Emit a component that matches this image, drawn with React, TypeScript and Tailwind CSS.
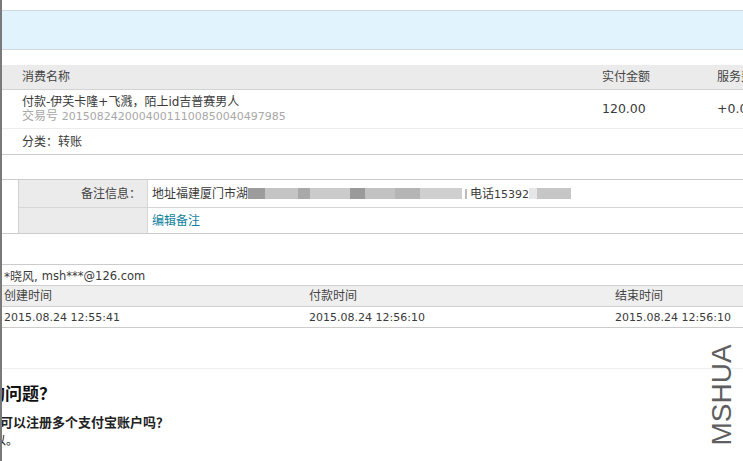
export default function App() {
  const blur = [
    { w: 17, c: "bg-[#9c9c9c]" },
    { w: 33, c: "bg-[#c4c4c4]" },
    { w: 12, c: "bg-[#a9a9a9]" },
    { w: 40, c: "bg-[#cbcbcb]" },
    { w: 15, c: "bg-[#9a9a9a]" },
    { w: 30, c: "bg-[#c2c2c2]" },
    { w: 25, c: "bg-[#b5b5b5]" },
    { w: 42, c: "bg-[#cfcfcf]" },
  ];

  return (
    <div className="relative h-[461px] w-[743px] overflow-hidden border-l-2 border-[#7a7a7a] bg-white text-[12px] leading-none text-[#3a3a3a] font-['DejaVu_Sans','Noto_Sans_CJK_SC',sans-serif]">
      <div className="h-[10px]" />
      <div className="h-[40px] border-y border-[#cfd9df] bg-[#e1f3fd]" />
      <div className="h-[15px]" />

      {/* trade info */}
      <div className="grid h-[25px] grid-cols-[600px_115px_1fr] items-center border-b border-[#d2d2d2] bg-[#ebebeb] text-[#444]">
        <div className="pl-[20px]">消费名称</div>
        <div>实付金额</div>
        <div className="whitespace-nowrap">服务费</div>
      </div>
      <div className="grid h-[39px] grid-cols-[600px_115px_1fr] items-center border-b border-[#ececec]">
        <div className="flex flex-col gap-[2px] pl-[20px]">
          <span>付款-伊芙卡隆+飞溅，陌上id吉普赛男人</span>
          <span className="text-[#a8a8a8]">
            交易号 <span className="text-[11px]">20150824200040011100850040497985</span>
          </span>
        </div>
        <div className="text-[12.5px]">120.00</div>
        <div className="whitespace-nowrap text-[12.5px]">+0.00</div>
      </div>
      <div className="flex h-[26px] items-center border-b border-[#cccccc] pl-[20px]">分类：转账</div>

      <div className="h-[24px]" />

      {/* memo */}
      <div className="flex border-y border-[#cccccc]">
        <div className="w-[16px]" />
        <div className="grid flex-1 grid-cols-[129px_1fr] border-l border-[#d0d0d0]">
          <div className="flex h-[28px] items-center justify-end border-r border-b border-[#d6d6d6] bg-[#ebebeb] pr-[6px] text-[#444]">
            备注信息：
          </div>
          <div className="flex h-[28px] items-center border-b border-[#d6d6d6] pl-[4px]">
            <span>地址福建厦门市湖</span>
            <span className="flex h-[11px] blur-[0.6px]">
              {blur.map((b, i) => (
                <span key={i} className={b.c} style={{ width: b.w }} />
              ))}
            </span>
            <span className="ml-[3px] mr-[3px] h-[10px] w-[2px] bg-[#bbbbbb]" />
            <span>
              电话<span className="text-[11px]">15392</span>
            </span>
            <span className="flex h-[11px] blur-[0.6px]">
              <span className="w-[8px] bg-[#e6e6e6]" />
              <span className="w-[34px] bg-[#c6c6c6]" />
            </span>
          </div>
          <div className="h-[25px] border-r border-[#d6d6d6] bg-[#ebebeb]" />
          <div className="flex h-[25px] items-center pl-[4px] text-[#0f7f9d]">编辑备注</div>
        </div>
      </div>

      <div className="h-[30px]" />

      {/* parties & times */}
      <div className="flex h-[21px] items-center border-t border-[#cccccc] pl-[2px] pt-[3px]">
        *晓风, <span className="ml-[4px] text-[11.5px]">msh***@126.com</span>
      </div>
      <div className="grid h-[22px] grid-cols-[305px_306px_1fr] items-center border-y border-[#cfcfcf] bg-[#efefef] text-[#444]">
        <div className="pl-[2px]">创建时间</div>
        <div className="pl-[2px]">付款时间</div>
        <div className="pl-[2px]">结束时间</div>
      </div>
      <div className="grid h-[21px] grid-cols-[305px_306px_1fr] items-center border-b border-[#cccccc] text-[11px]">
        <div className="pl-[2px]">2015.08.24 12:55:41</div>
        <div className="pl-[2px]">2015.08.24 12:56:10</div>
        <div className="whitespace-nowrap pl-[2px]">2015.08.24 12:56:10</div>
      </div>

      <div className="h-[40px]" />

      {/* faq */}
      <div className="border-t border-[#f0f0f0] pt-[17px]">
        <div className="-ml-[14px] whitespace-nowrap text-[17px] font-bold text-[#111]">的问题？</div>
        <div className="mt-[13px] -ml-[2px] whitespace-nowrap text-[13px] font-bold text-[#222]">
          可以注册多个支付宝账户吗？
        </div>
        <div className="mt-[6px] -ml-[20px] whitespace-nowrap text-[#222]">可以。</div>
      </div>

      <div className="absolute left-[669px] top-[381px] h-[28px] w-[102px] -rotate-90 text-center font-['Liberation_Sans',sans-serif] text-[28px] leading-[28px] text-[#5e5e5e]">
        MSHUA
      </div>
    </div>
  );
}
